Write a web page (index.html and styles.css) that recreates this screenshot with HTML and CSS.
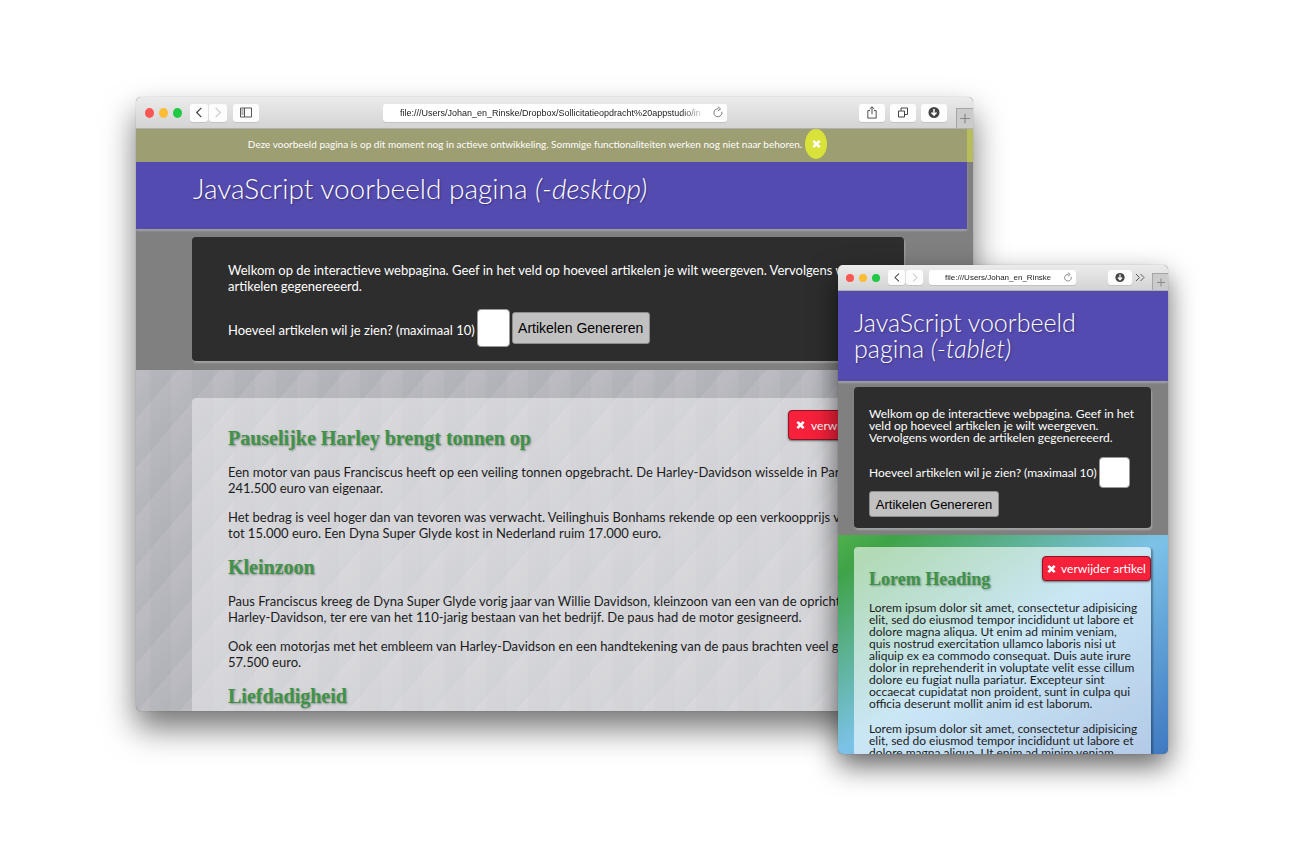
FILE: index.html
```html
<!DOCTYPE html>
<html lang="nl">
<head>
<meta charset="utf-8">
<title>JavaScript voorbeeld pagina</title>
<link rel="stylesheet" href="styles.css">
</head>
<body>
<svg class="defs" width="0" height="0" aria-hidden="true">
  <symbol id="back" viewBox="0 0 12 14"><path d="M8.500 2 3.500 7l5 5" fill="none" stroke="currentColor" stroke-width="1.300"/></symbol>
  <symbol id="forward" viewBox="0 0 12 14"><path d="m3.500 2 5 5-5 5" fill="none" stroke="currentColor" stroke-width="1.300"/></symbol>
  <symbol id="reload" viewBox="0 0 12 12"><path d="M9.800 5.200A4 4 0 1 1 6.500 2.300" fill="none" stroke="currentColor"/><path d="M5.800 0 8.600 2.400 5.800 4.600" fill="none" stroke="currentColor"/></symbol>
  <symbol id="download" viewBox="0 0 12 12"><circle cx="6" cy="6" r="5.500" fill="#444"/><path d="M6 2.500v6M3.500 6 6 8.700 8.500 6" fill="none" stroke="#fff" stroke-width="1.500"/></symbol>
  <symbol id="cross" viewBox="0 0 10 10"><path d="m1.500 1.500 7 7M8.500 1.500l-7 7" fill="none" stroke="#fff" stroke-width="3"/></symbol>
  <symbol id="plus" viewBox="0 0 10 10"><path d="M5 1v8M1 5h8" fill="none" stroke="currentColor"/></symbol>
</svg>
<main class="stage">
  <section class="window desktop">
    <div class="toolbar">
      <div class="lights"><span class="light red"></span><span class="light yellow"></span><span class="light green"></span></div>
      <div class="nav">
        <button class="tool" aria-label="Terug"><svg class="icon"><use href="#back"/></svg></button>
        <button class="tool off" aria-label="Vooruit"><svg class="icon"><use href="#forward"/></svg></button>
      </div>
      <button class="tool wide" aria-label="Zijbalk"><svg class="icon" viewBox="0 0 12 12"><path d="M.5 1.500h11v9H.5zM4.500 1.500v9M1.500 3.500h2M1.500 5.500h2M1.500 7.500h2" fill="none" stroke="currentColor" stroke-width=".9"/></svg></button>
      <div class="address"><span class="url">file:///Users/Johan_en_Rinske/Dropbox/Sollicitatieopdracht%20appstudio/in</span><svg class="icon"><use href="#reload"/></svg></div>
      <div class="actions">
        <button class="tool wide" aria-label="Deel"><svg class="icon" viewBox="0 0 12 14"><path d="M4 5H1.500v8h9V5H8M6 9V1M3.500 3.300 6 .9l2.500 2.400" fill="none" stroke="currentColor"/></svg></button>
        <button class="tool wide" aria-label="Tabbladen"><svg class="icon" viewBox="0 0 12 12"><path d="M1.500 4.500h6v6h-6zM4 4V1.500h6.500V8H8" fill="none" stroke="currentColor"/></svg></button>
        <button class="tool wide" aria-label="Downloads"><svg class="icon"><use href="#download"/></svg></button>
      </div>
      <button class="newtab" aria-label="Nieuw tabblad"><svg class="icon"><use href="#plus"/></svg></button>
    </div>
    <div class="notice"><span>Deze voorbeeld pagina is op dit moment nog in actieve ontwikkeling. Sommige functionaliteiten werken nog niet naar behoren.</span><button class="dismiss" aria-label="Sluiten"><svg class="cross"><use href="#cross"/></svg></button></div>
    <div class="top">
      <header class="header"><h1 class="title">JavaScript voorbeeld pagina <em>(-desktop)</em></h1></header>
      <form class="panel">
        <p class="intro">Welkom op de interactieve webpagina. Geef in het veld op hoeveel artikelen je wilt weergeven. Vervolgens w<br>artikelen gegenereeerd.</p>
        <div class="row"><label for="count-d">Hoeveel artikelen wil je zien? (maximaal 10)</label><input class="count" id="count-d" type="text"><button class="generate" type="button">Artikelen Genereren</button></div>
      </form>
    </div>
    <div class="content">
      <article class="card">
        <div class="card-head"><h2 class="heading">Pauselijke Harley brengt tonnen op</h2><button class="remove"><svg class="cross"><use href="#cross"/></svg>verwijder artikel</button></div>
        <p class="text">Een motor van paus Franciscus heeft op een veiling tonnen opgebracht. De Harley-Davidson wisselde in Parijs<br>241.500 euro van eigenaar.</p>
        <p class="text">Het bedrag is veel hoger dan van tevoren was verwacht. Veilinghuis Bonhams rekende op een verkoopprijs van<br>tot 15.000 euro. Een Dyna Super Glyde kost in Nederland ruim 17.000 euro.</p>
        <h2 class="heading">Kleinzoon</h2>
        <p class="text">Paus Franciscus kreeg de Dyna Super Glyde vorig jaar van Willie Davidson, kleinzoon van een van de oprichters<br>Harley-Davidson, ter ere van het 110-jarig bestaan van het bedrijf. De paus had de motor gesigneerd.</p>
        <p class="text">Ook een motorjas met het embleem van Harley-Davidson en een handtekening van de paus brachten veel geld<br>57.500 euro.</p>
        <h2 class="heading">Liefdadigheid</h2>
      </article>
    </div>
  </section>

  <section class="window tablet">
    <div class="toolbar">
      <div class="lights"><span class="light red"></span><span class="light yellow"></span><span class="light green"></span></div>
      <div class="nav">
        <button class="tool" aria-label="Terug"><svg class="icon"><use href="#back"/></svg></button>
        <button class="tool off" aria-label="Vooruit"><svg class="icon"><use href="#forward"/></svg></button>
      </div>
      <div class="address"><span class="url">file:///Users/Johan_en_Rinske</span><svg class="icon"><use href="#reload"/></svg></div>
      <div class="actions">
        <button class="tool wide" aria-label="Downloads"><svg class="icon"><use href="#download"/></svg></button>
        <button class="more" aria-label="Meer"><svg class="icon" viewBox="0 0 10 10"><path d="m1 1.500 3.500 3.500L1 8.500M5.500 1.500 9 5 5.500 8.500" fill="none" stroke="currentColor"/></svg></button>
      </div>
      <button class="newtab" aria-label="Nieuw tabblad"><svg class="icon"><use href="#plus"/></svg></button>
    </div>
    <div class="top">
      <header class="header"><h1 class="title">JavaScript voorbeeld<br>pagina <em>(-tablet)</em></h1></header>
      <form class="panel">
        <p class="intro">Welkom op de interactieve webpagina. Geef in het<br>veld op hoeveel artikelen je wilt weergeven.<br>Vervolgens worden de artikelen gegenereeerd.</p>
        <div class="row"><label for="count-t">Hoeveel artikelen wil je zien? (maximaal 10)</label><input class="count" id="count-t" type="text"><button class="generate" type="button">Artikelen Genereren</button></div>
      </form>
    </div>
    <div class="content">
      <article class="card">
        <div class="card-head"><h2 class="heading">Lorem Heading</h2><button class="remove"><svg class="cross"><use href="#cross"/></svg>verwijder artikel</button></div>
        <p class="text">Lorem ipsum dolor sit amet, consectetur adipisicing<br>elit, sed do eiusmod tempor incididunt ut labore et<br>dolore magna aliqua. Ut enim ad minim veniam,<br>quis nostrud exercitation ullamco laboris nisi ut<br>aliquip ex ea commodo consequat. Duis aute irure<br>dolor in reprehenderit in voluptate velit esse cillum<br>dolore eu fugiat nulla pariatur. Excepteur sint<br>occaecat cupidatat non proident, sunt in culpa qui<br>officia deserunt mollit anim id est laborum.</p>
        <p class="text">Lorem ipsum dolor sit amet, consectetur adipisicing<br>elit, sed do eiusmod tempor incididunt ut labore et<br>dolore magna aliqua. Ut enim ad minim veniam,</p>
      </article>
    </div>
  </section>
</main>
</body>
</html>
```
FILE: styles.css
```css
* { box-sizing: border-box; }
body { margin: 0; background: #fff; font-family: Lato, "Liberation Sans", sans-serif; }
h1, h2, p { margin: 0; }
button, input { font: inherit; margin: 0; padding: 0; border: 0; }
.defs { display: block; }

.stage { position: relative; height: 100vh; overflow: hidden; }

/* Browser windows */
.window {
  position: absolute;
  display: flex;
  flex-direction: column;
  overflow: hidden;
  border-radius: 5px;
  white-space: nowrap;
}
.desktop {
  left: 136px; right: 341px; top: 97px; bottom: 153px;
  background: #808080;
  box-shadow: 0 0 1px rgba(0,0,0,.4), 0 17px 32px rgba(0,0,0,.55);
}
.tablet {
  left: 838px; right: 146px; top: 265px; bottom: 110px;
  background: #808080;
  box-shadow: 0 0 1px rgba(0,0,0,.4), 0 12px 28px rgba(0,0,0,.6);
}

/* Toolbar */
.toolbar {
  flex: none;
  display: flex;
  align-items: center;
  height: 32px;
  padding-left: 9px;
  background: linear-gradient(#ebebeb, #d4d4d4);
  border-bottom: 1px solid #b0b0b0;
}
.lights { display: flex; gap: 5px; }
.light { width: 9px; height: 10px; border-radius: 50%; }
.red { background: #fc5652; }
.yellow { background: #fdbc35; }
.green { background: #1fc944; }
.nav { display: flex; gap: 1px; margin-left: 8px; }
.tool {
  display: flex;
  align-items: center;
  justify-content: center;
  width: 18px;
  height: 18px;
  border-radius: 3px;
  background: #fdfdfd;
  color: #444;
  box-shadow: 0 1px 0 rgba(0,0,0,.1);
}
.off { color: #ccc; }
.wide { width: 26px; }
.icon { display: block; flex: none; width: 12px; height: 13px; }
.nav + .wide { margin-left: 6px; }
.address {
  display: flex;
  align-items: center;
  width: 344px;
  height: 18px;
  margin: 0 auto;
  padding: 0 3px 0 17px;
  border-radius: 3px;
  background: #fff;
  color: #777;
  box-shadow: 0 1px 0 rgba(0,0,0,.1);
}
.url {
  flex: 1;
  overflow: hidden;
  margin-right: 6px;
  font: 9px/18px "Liberation Sans", sans-serif;
  color: #222;
  -webkit-mask-image: linear-gradient(to right, #000 92%, transparent);
  mask-image: linear-gradient(to right, #000 92%, transparent);
}
.actions { display: flex; align-items: center; gap: 5px; }
.desktop .actions { margin-left: 8px; }
.newtab {
  display: flex;
  align-items: center;
  justify-content: center;
  align-self: flex-end;
  width: 17px;
  height: 20px;
  margin-left: 9px;
  border: 1px solid #a5a5a5;
  border-width: 1px 0 0 1px;
  background: #cbcbcb;
  color: #888;
}
.more { color: #555; background: none; }

/* Notice bar */
.notice {
  flex: none;
  display: flex;
  align-items: center;
  justify-content: center;
  gap: 3px;
  height: 33px;
  padding-right: 28px;
  padding-bottom: 3px;
  background: #9d9e72;
  border-right: 6px solid #b8bd5c;
  color: #fff;
  font-size: 10px;
}
.dismiss {
  display: flex;
  align-items: center;
  justify-content: center;
  width: 22px;
  height: 30px;
  border-radius: 50%;
  background: #d8e23a;
}
.cross { flex: none; width: 9px; height: 10px; }

/* Page header and form */
.top { flex: none; }
.header {
  background: #544bb0;
  color: #fff;
  box-shadow: 0 2px 2px #a0a0a0;
}
.title {
  font-weight: 300;
  text-shadow: 1px 1px 2px rgba(0,0,0,.35);
}
.panel {
  border-radius: 4px;
  background: #2d2d2d;
  color: #fff;
  box-shadow: 1px 2px 2px #a3a3a3;
}
.row { display: flex; align-items: center; }
.count {
  border: 1px solid #999;
  border-radius: 4px;
  background: #fff;
}
.generate {
  border: 1px solid #8c8c8c;
  border-radius: 3px;
  background: #c1c1c1;
  color: #000;
  font-family: "Liberation Sans", sans-serif;
}

/* Articles */
.content { flex: 1; min-height: 0; overflow: hidden; }
.card { min-height: 100%; border-radius: 4px 4px 0 0; color: #1c1c1c; }
.card-head { display: flex; align-items: flex-start; justify-content: space-between; }
.heading {
  color: #3d9348;
  font-family: "Liberation Serif", serif;
  font-weight: 700;
  text-shadow: 1px 1px 2px rgba(0,0,0,.35);
}
.remove {
  display: flex;
  align-items: center;
  justify-content: center;
  border: 1px solid #8d1525;
  border-radius: 4px;
  background: #f7213b;
  color: #fff;
  box-shadow: 0 1px 2px rgba(0,0,0,.5);
}

/* Desktop page */
.desktop .header { height: 67px; margin-right: 6px; padding: 10px 57px; }
.desktop .title { font-size: 28px; line-height: 32px; }
.desktop .panel {
  height: 124px;
  margin: 8px 69px 9px 56px;
  padding: 25px 36px 0;
  font-size: 13px;
}
.desktop .intro { line-height: 16px; }
.desktop .row { gap: 2px; margin-top: 15px; }
.desktop label { padding-top: 3px; }
.desktop .count { width: 33px; height: 38px; }
.desktop .generate { width: 138px; height: 32px; font-size: 14px; }
.desktop .content {
  padding: 28px 69px 0 56px;
  background:
    repeating-linear-gradient(to right, transparent 0 14px, rgba(80,90,105,.04) 14px 35px, transparent 35px 42px),
    linear-gradient(to bottom right, #bdbcc3 0%, #b4b6bb 50%, #bdbcc3 50%, #b4b6bb 100%) 0 0 / 42px 49px;
}
.desktop .card { padding: 12px 0 0 36px; background: rgba(255,255,255,.42); }
.desktop .heading { font-size: 20px; line-height: 24px; margin-top: 14px; }
.desktop .card-head .heading { margin-top: 16px; }
.desktop .text { font-size: 13px; line-height: 16px; margin-top: 13px; }
.desktop .heading + .text, .desktop .card-head + .text { margin-top: 14px; }
.desktop .remove { gap: 6px; width: 116px; height: 30px; font-size: 12px; }

/* Tablet page */
.tablet .toolbar { height: 26px; padding-left: 8px; }
.tablet .light { width: 8px; height: 8px; }
.tablet .tool { width: 17px; height: 15px; }
.tablet .wide { width: 24px; }
.tablet .icon { width: 10px; height: 11px; }
.tablet .address { width: 147px; height: 15px; margin: 0 auto 0 6px; padding-left: 16px; }
.tablet .url { font-size: 8px; line-height: 15px; }
.tablet .newtab { width: 16px; height: 17px; margin-left: 7px; }
.tablet .actions { gap: 3px; }
.tablet .header { height: 90px; padding: 18px 16px; }
.tablet .title { font-size: 25px; line-height: 26px; }
.tablet .panel { height: 141px; margin: 6px 17px 7px 16px; padding: 21px 15px 0; font-size: 12px; }
.tablet .intro { line-height: 12px; }
.tablet .row { flex-wrap: wrap; gap: 3px 2px; margin-top: 13px; }
.tablet .count { width: 31px; height: 31px; }
.tablet .generate { width: 130px; height: 26px; font-size: 13px; }
.tablet .content {
  padding: 12px 17px 0 16px;
  background: linear-gradient(to bottom right, #4fb04c 0%, #3fa347 9%, #7cc2e8 50%, #3f78c0 100%);
}
.tablet .card {
  padding: 9px 0 0 15px;
  background: rgba(255,255,255,.6);
  box-shadow: 2px 1px 2px rgba(0,0,0,.3);
}
.tablet .heading { font-size: 18px; line-height: 20px; margin-top: 13px; }
.tablet .text { font-size: 12px; line-height: 12px; margin-top: 13px; }
.tablet .remove { gap: 5px; width: 109px; height: 25px; font-size: 12px; }
```
